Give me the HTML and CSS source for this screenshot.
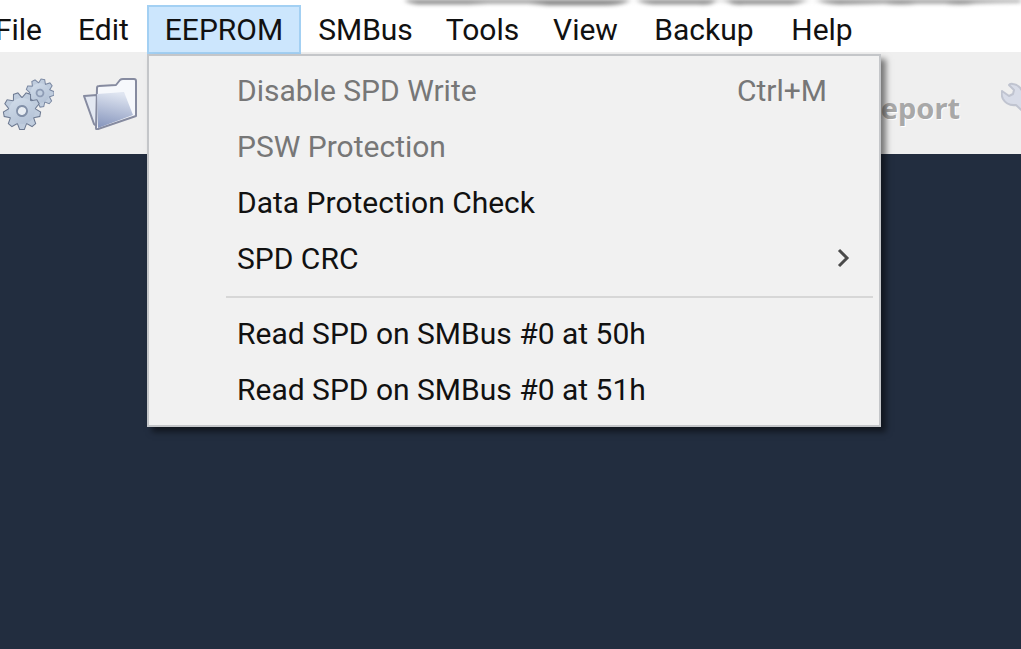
FILE: index.html
```html
<!DOCTYPE html>
<html lang="en">
<head>
  <meta charset="UTF-8">
  <meta name="viewport" content="width=device-width, initial-scale=1.0">
  <title>EEPROM</title>
  <link rel="stylesheet" href="styles.css">
</head>
<body>

  <nav class="menubar">
    <button class="menu-button first">File</button>
    <button class="menu-button">Edit</button>
    <div class="menu-holder">
      <button class="menu-button active">EEPROM</button>
      <div class="dropdown">
        <button class="menu-item" disabled><span>Disable SPD Write</span><span>Ctrl+M</span></button>
        <button class="menu-item" disabled>PSW Protection</button>
        <button class="menu-item">Data Protection Check</button>
        <button class="menu-item">SPD CRC
          <svg class="arrow" viewBox="0 0 14 20" width="14" height="20"><path d="M2 2l8 8-8 8" fill="none" stroke="#4a4a4a" stroke-width="3"/></svg>
        </button>
        <hr class="separator">
        <button class="menu-item">Read SPD on SMBus #0 at 50h</button>
        <button class="menu-item">Read SPD on SMBus #0 at 51h</button>
      </div>
    </div>
    <button class="menu-button">SMBus</button>
    <button class="menu-button">Tools</button>
    <button class="menu-button">View</button>
    <button class="menu-button">Backup</button>
    <button class="menu-button">Help</button>
    <svg class="title-shadow" viewBox="0 0 621 10" preserveAspectRatio="none">
      <path d="M2-6H625V2Q590 2 575 3Q560 5 545 3H518Q500 5 485 3L440 4Q425 3 420 1Q412-1 406 1Q400 3 392 4H345Q335 5 330 2Q320-1 315 2Q310 5 300 4H255Q244 3 240 1Q234-1 230 1Q222 5 205 5H150L130 3H90L70 4H20Q2 2 2-6Z" fill="#777"/>
    </svg>
  </nav>

  <header class="toolbar">
    <button class="tool" aria-label="Settings">
      <svg class="soft" viewBox="0 0 54 54" width="54" height="54">
        <defs>
          <linearGradient id="gear" x1="0" y1="0" x2="1" y2="1">
            <stop offset="0" stop-color="#d3deeb"/>
            <stop offset="1" stop-color="#afbed3"/>
          </linearGradient>
          <path id="tooth" d="M-5-10L-2-18H2L5-10Z"/>
          <g id="teeth">
            <use href="#tooth"/>
            <use href="#tooth" transform="rotate(40)"/>
            <use href="#tooth" transform="rotate(80)"/>
            <use href="#tooth" transform="rotate(120)"/>
            <use href="#tooth" transform="rotate(160)"/>
            <use href="#tooth" transform="rotate(200)"/>
            <use href="#tooth" transform="rotate(240)"/>
            <use href="#tooth" transform="rotate(280)"/>
            <use href="#tooth" transform="rotate(320)"/>
          </g>
        </defs>
        <!-- small gear -->
        <g transform="translate(40 17) rotate(12) scale(.75)">
          <use href="#teeth" fill="#7886a0" stroke="#7886a0" stroke-width="2.6"/>
          <circle r="14.5" fill="#7886a0"/>
          <use href="#teeth" fill="#bfccdd"/>
          <circle r="13" fill="url(#gear)"/>
          <circle r="4.6" fill="#c2cfe0" stroke="#8e9cb5" stroke-width="2.4"/>
        </g>
        <!-- big gear -->
        <g transform="translate(22 35) rotate(20)">
          <use href="#teeth" fill="#6b7890" stroke="#6b7890" stroke-width="2"/>
          <circle r="14" fill="#75829a"/>
          <use href="#teeth" fill="#bfccdd"/>
          <circle r="13" fill="url(#gear)"/>
          <circle r="5" fill="#e8edf3" stroke="#8290a8" stroke-width="2"/>
        </g>
      </svg>
    </button>
    <button class="tool" aria-label="Open">
      <svg class="soft" viewBox="0 0 56 54" width="56" height="54">
        <defs>
          <linearGradient id="folder" x1=".4" y1="0" x2=".2" y2="1">
            <stop offset="0" stop-color="#dfe5f1"/>
            <stop offset="1" stop-color="#8796bd"/>
          </linearGradient>
        </defs>
        <path d="M2 20L15 19 17 52 12 48Z" fill="#e3e8f2" stroke="#868ba0" stroke-width="2" stroke-linejoin="round"/>
        <path d="M15 12Q15 10 17 10L34 9 38 4Q39 3 41 3L52 3Q54 3 54 5V40L16 53Q14 54 14 52Z" fill="#f6f8fc" stroke="#868ba0" stroke-width="2" stroke-linejoin="round"/>
        <path d="M15 18L42 16 51 39 16 52Z" fill="url(#folder)"/>
      </svg>
    </button>
    <button class="tool report" disabled>Report</button>
    <button class="tool wrench" aria-label="Tools" disabled>
      <svg class="soft" viewBox="0 0 40 44" width="40" height="44">
        <path d="M12 3Q20 4 22 13Q22 16 21 18L38 35 33 41 15 24Q6 25 2 18Q0 14 1 10L8 15 12 13 13 9 8 4Q9 2 12 3Z" fill="#d8dce8" stroke="#c0c4d0" stroke-width="2" stroke-linejoin="round"/>
      </svg>
    </button>
  </header>

  <main class="workspace"></main>

</body>
</html>
```
FILE: styles.css
```css
* {
  box-sizing: border-box;
}

body {
  display: flex;
  flex-direction: column;
  min-height: 100vh;
  margin: 0;
  overflow-x: hidden;
  background-color: #222d3f;
  font-family: Roboto, "Open Sans", sans-serif;
  font-size: 30px;
}

button {
  border: 0;
  padding: 0;
  background: none;
  color: #111;
  font: inherit;
  white-space: nowrap;
}

.menubar {
  position: relative;
  display: grid;
  grid-template-columns: 60px 87px 154px 129px 105px 101px 136px 100px;
  height: 52px;
  padding-top: 5px;
  background-color: #fff;
}

.menu-button {
  display: flex;
  align-items: center;
  justify-content: center;
  width: 100%;
  height: 49px;
}

.menu-button.first {
  justify-content: flex-end;
  padding-right: 18px;
}

.menu-button.active {
  border: 2px solid #a3d0f3;
  background-color: #cce6fd;
}

.menu-holder {
  position: relative;
}

.dropdown {
  position: absolute;
  z-index: 2;
  top: 49px;
  left: 0;
  width: 734px;
  padding: 6px 6px 8px;
  border: 2px solid #c4c6c9;
  background-color: #f1f1f1;
  box-shadow: 5px 5px 6px rgba(0, 0, 0, 0.5);
}

.menu-item {
  display: flex;
  align-items: center;
  justify-content: space-between;
  width: 100%;
  height: 56px;
  padding: 0 46px 0 82px;
}

.menu-item:disabled {
  color: #777;
}

.arrow {
  margin-right: -24px;
}

.separator {
  height: 2px;
  margin: 10px 0 7px 71px;
  border: 0;
  background-color: #d7d7d7;
}

.title-shadow {
  position: absolute;
  top: 0;
  right: 0;
  width: 61%;
  height: 10px;
  filter: blur(2px);
}

.toolbar {
  display: flex;
  align-items: center;
  height: 102px;
  overflow: hidden;
  background-color: #efefef;
}

.tool {
  display: flex;
  flex: none;
}

.tool + .tool {
  margin-left: 28px;
}

.tool .soft {
  filter: blur(0.5px);
}

.tool.report {
  margin-left: auto;
  padding-top: 8px;
  color: #a8a8a8;
  font-family: "Noto Sans", sans-serif;
  font-size: 29px;
  font-weight: bold;
  text-shadow: 1px 1px 0 #fff;
}

.tool.wrench {
  margin-left: 41px;
  margin-right: -20px;
}

.workspace {
  flex: 1;
}
```
